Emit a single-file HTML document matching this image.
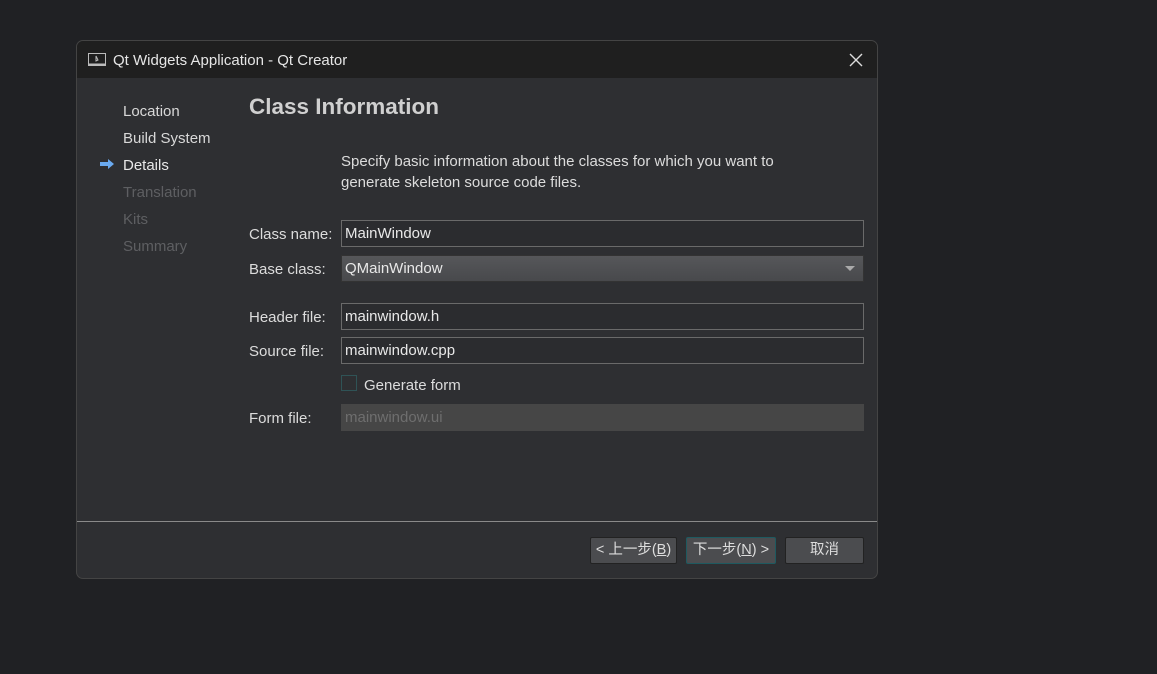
<!DOCTYPE html>
<html><head><style>
body{margin:0;width:1157px;height:674px;background:#202124;font-family:"Liberation Sans","Noto Sans CJK SC",sans-serif;color:#dcdcdc;position:relative;overflow:hidden}
.win{position:absolute;left:76px;top:40px;width:800px;height:537px;background:#2e2f32;border:1px solid #444;border-radius:7px;overflow:hidden}
.tb{position:absolute;left:0;top:0;right:0;height:37px;background:#1f1f1f;}
.tb .t{position:absolute;left:36px;top:11px;font-size:15px;color:#e6e6e6}
.a{position:absolute;font-size:15px;white-space:nowrap}
.in{position:absolute;left:264px;width:523px;height:27px;box-sizing:border-box;border:1px solid #6a6a6a;background:#2b2c2f;font-size:15px;line-height:25px;padding-left:3px;color:#e8e8e8}
.btn{position:absolute;top:496px;height:27px;box-sizing:border-box;border:1px solid #222;background:#4b4c4f;border-radius:2px;font-size:14.5px;line-height:25px;text-align:center;color:#ddd}
</style></head><body>
<div class="win">
 <div class="tb">
  <svg style="position:absolute;left:11px;top:12px" width="18" height="14"><rect x="0.5" y="0.5" width="17" height="12" fill="none" stroke="#bbb"/><rect x="0.5" y="10.5" width="17" height="2" fill="#bbb"/><path d="M8 3 L8 8 L10 7 Z" fill="none" stroke="#bbb"/></svg>
  <div class="t">Qt Widgets Application - Qt Creator</div>
  <svg style="position:absolute;left:772px;top:12px" width="14" height="14"><path d="M1 1 L13 13 M13 1 L1 13" stroke="#ddd" stroke-width="1.4"/></svg>
 </div>
 <div class="a" style="left:46px;top:62px;color:#d8d8d8">Location</div>
 <div class="a" style="left:46px;top:89px;color:#d8d8d8">Build System</div>
 <svg style="position:absolute;left:23px;top:117px" width="15" height="12"><path d="M0 4 H8 V1 L14 6 L8 11 V8 H0 Z" fill="#6aaaf0"/></svg>
 <div class="a" style="left:46px;top:116px;color:#e8e8e8">Details</div>
 <div class="a" style="left:46px;top:143px;color:#5e5f62">Translation</div>
 <div class="a" style="left:46px;top:170px;color:#5e5f62">Kits</div>
 <div class="a" style="left:46px;top:197px;color:#5e5f62">Summary</div>
 <div class="a" style="left:172px;top:53px;font-size:22.5px;font-weight:bold;color:#d0d0d0">Class Information</div>
 <div class="a" style="left:264px;top:110px;line-height:21px">Specify basic information about the classes for which you want to<br>generate skeleton source code files.</div>
 <div class="a" style="left:172px;top:185px">Class name:</div>
 <div class="in" style="top:179px">MainWindow</div>
 <div class="a" style="left:172px;top:220px">Base class:</div>
 <div class="in" style="top:214px;border-color:#333;background:linear-gradient(#56575a,#48494c)">QMainWindow<svg style="position:absolute;right:8px;top:10px" width="10" height="6"><path d="M0 0 H10 L5 5 Z" fill="#aaa"/></svg></div>
 <div class="a" style="left:172px;top:268px">Header file:</div>
 <div class="in" style="top:262px">mainwindow.h</div>
 <div class="a" style="left:172px;top:302px">Source file:</div>
 <div class="in" style="top:296px">mainwindow.cpp</div>
 <div style="position:absolute;left:264px;top:334px;width:14px;height:14px;border:1px solid #2f5356"></div>
 <div class="a" style="left:287px;top:336px">Generate form</div>
 <div class="a" style="left:172px;top:369px">Form file:</div>
 <div class="in" style="top:363px;border-color:#464646;background:#464646;color:#6e6e6e">mainwindow.ui</div>
 <div style="position:absolute;left:0;right:0;top:480px;height:1px;background:#8a8a8a"></div>
 <div class="btn" style="left:513px;width:87px">&lt; 上一步(<u>B</u>)</div>
 <div class="btn" style="left:609px;width:90px;border-color:#1e5a60">下一步(<u>N</u>) &gt;</div>
 <div class="btn" style="left:708px;width:79px">取消</div>
</div>
</body></html>
